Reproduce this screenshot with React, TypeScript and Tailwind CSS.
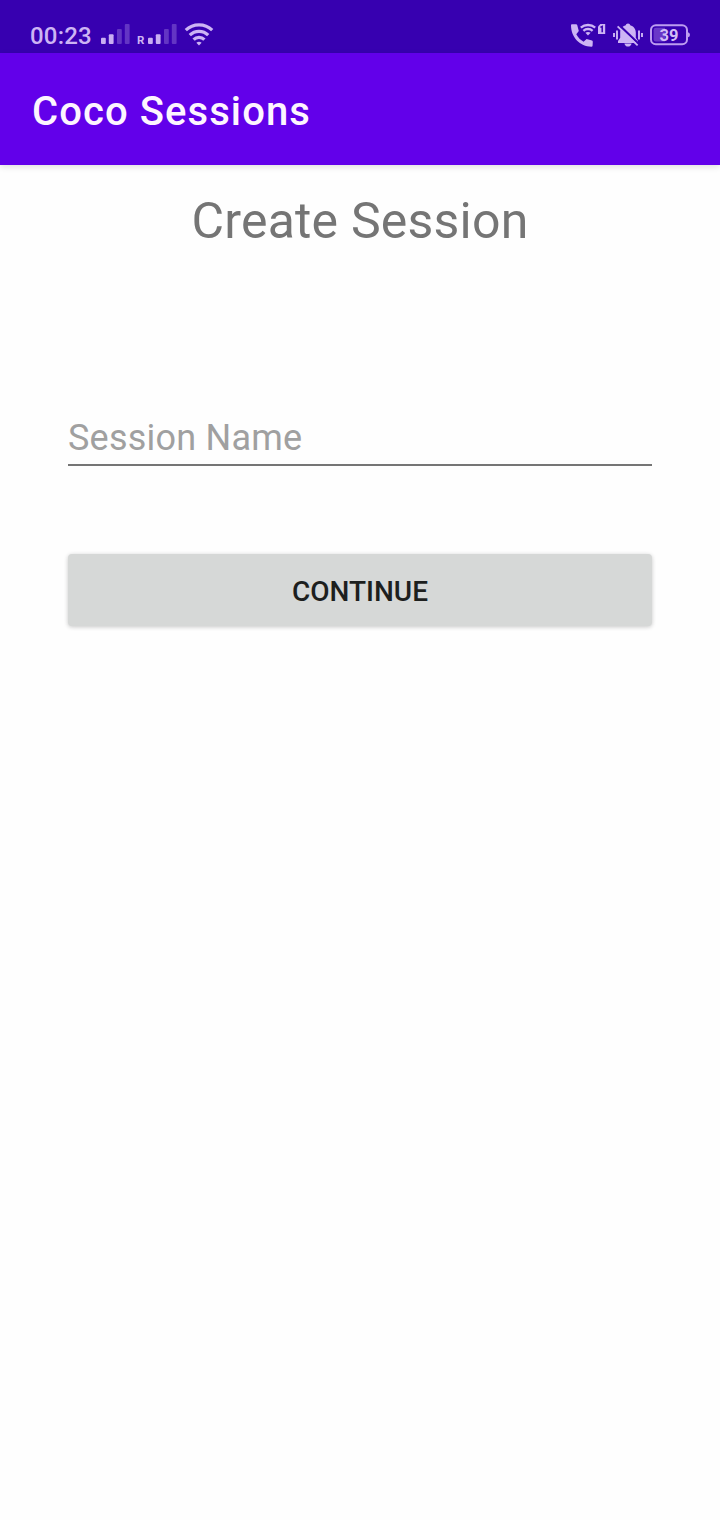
import React from "react";

function SignalBars() {
  return (
    <svg width="30" height="22" viewBox="0 0 30 22" fill="#c9aef2">
      <rect x="1" y="14.8" width="4.8" height="6.2" rx="1" />
      <rect x="8.8" y="11.3" width="4.8" height="9.7" rx="1" />
      <rect x="17" y="6" width="4.8" height="15" rx="1" opacity="0.3" />
      <rect x="24.8" y="1" width="4.8" height="20" rx="1" opacity="0.3" />
    </svg>
  );
}

function WifiIcon() {
  return (
    <svg width="30" height="24" viewBox="0 0 30 24" fill="none" stroke="#cdb4f4" strokeWidth="3.2">
      <path d="M1.8 7.2 A19 19 0 0 1 28.2 7.2" />
      <path d="M5.8 12.2 A13 13 0 0 1 24.2 12.2" />
      <path d="M9.6 16.7 A7.5 7.5 0 0 1 20.4 16.7" />
      <path d="M12.4 19.8 Q15 17.8 17.6 19.8 L15 22.4 Z" fill="#cdb4f4" stroke="none" />
    </svg>
  );
}

function WifiCallIcon() {
  return (
    <svg width="36" height="26" viewBox="0 0 36 26" fill="none">
      <path
        d="M1 2 Q1 1.2 2 1.2 L6 1.2 Q7 1.2 7.2 2 L8.8 8 L6.3 11.3 C8 14.5 10.7 17.3 13.6 18.7 L16.6 15.9 L22 17.6 Q22.8 17.9 22.8 18.8 L22.6 22.6 Q22.6 23.8 21.4 23.8 C10 23.4 1 14.6 1 2 Z"
        fill="#cdb4f4"
      />
      <g stroke="#cdb4f4" strokeWidth="2.3">
        <path d="M10.8 4.7 A11 11 0 0 1 25.2 4.7" />
        <path d="M13.4 7.8 A6.8 6.8 0 0 1 22.6 7.8" />
      </g>
      <path d="M15.4 9.8 Q18 8 20.6 9.8 L18 12.6 Z" fill="#cdb4f4" />
      <path d="M30.4 1 H35.2 V11 H28 V3.5 Z" fill="#cdb4f4" />
      <path d="M30.4 4.4 L32.2 3.4 V9.2" stroke="#3800b0" strokeWidth="1.5" />
    </svg>
  );
}

function MutedBellIcon() {
  return (
    <svg width="32" height="26" viewBox="0 0 32 26" fill="none">
      <path
        d="M16 0.6 C17.2 0.6 18 1.4 18.2 2.2 C21.7 3.1 23.8 6 23.8 9.4 V14.8 L26 18 V20 H6 V18 L8.2 14.8 V9.4 C8.2 6 10.3 3.1 13.8 2.2 C14 1.4 14.8 0.6 16 0.6 Z M12.4 20.5 H19.6 C19.2 22.6 17.8 23.6 16 23.6 C14.2 23.6 12.8 22.6 12.4 20.5 Z"
        fill="#cdb4f4"
      />
      <path d="M6.9 1.9 L27 21" stroke="#3800b0" strokeWidth="2.2" />
      <path d="M5.6 3.4 L25.6 22.4" stroke="#cdb4f4" strokeWidth="1.8" />
      <path d="M2 10 V14 M5 7.5 V16.5 M27 7.5 V16.5 M30 10 V14" stroke="#cdb4f4" strokeWidth="1.9" />
    </svg>
  );
}

function BatteryIcon() {
  return (
    <svg width="42" height="24" viewBox="0 0 42 24">
      <rect x="2" y="2.2" width="36" height="19" rx="4.8" fill="none" stroke="#bd9df0" strokeWidth="2" />
      <path d="M39 9.3 Q41 9.8 41 11.8 Q41 13.8 39 14.3 Z" fill="#bd9df0" />
      <path d="M7 4.8 H16 V18.6 H7 Q4.6 18.6 4.6 16.2 V7.2 Q4.6 4.8 7 4.8 Z" fill="#6a38c8" />
      <text x="20" y="17.8" textAnchor="middle" fill="#d3bdf6" fontSize="16.5" fontWeight="700" fontFamily="Roboto, sans-serif">
        39
      </text>
    </svg>
  );
}

function StatusBar() {
  return (
    <div className="flex h-[53px] items-start justify-between bg-[#3700b0] pl-[30px] pr-[29px] pt-[23px] text-[#cdb4f4]">
      <div className="flex items-start">
        <span className="w-[70px] text-[24px] leading-[26px] font-medium tracking-[0.2px]">00:23</span>
        <SignalBars />
        <span className="ml-[7px] w-[10px] pt-[11px] text-[11.5px] leading-[12px] font-bold">R</span>
        <SignalBars />
        <span className="ml-[7px]">
          <WifiIcon />
        </span>
      </div>
      <div className="flex items-start">
        <WifiCallIcon />
        <span className="ml-[6px]">
          <MutedBellIcon />
        </span>
        <span className="ml-[5px]">
          <BatteryIcon />
        </span>
      </div>
    </div>
  );
}

export default function App() {
  return (
    <div className="flex min-h-[1520px] w-[720px] flex-col bg-[#fefefe] font-['Roboto',sans-serif]">
      <StatusBar />
      <header className="flex h-[112px] items-center bg-[#6200ea] pl-8 pt-[5px] shadow-[0_2px_6px_rgba(0,0,0,0.12)]">
        <h1 className="text-[40px] leading-none font-medium tracking-[1.08px] text-[#fdf5ff]">Coco Sessions</h1>
      </header>
      <main className="flex flex-col px-[68px]">
        <h2 className="mt-[28px] text-center text-[50px] leading-[56px] tracking-[0.2px] text-[#757575]">Create Session</h2>
        <input
          className="mt-[163px] h-[54px] border-b-2 border-[#757575] bg-transparent p-0 text-[36px] leading-[42px] tracking-[0.22px] outline-none placeholder:text-[#a0a0a0]"
          placeholder="Session Name"
        />
        <button className="mt-[88px] h-[72px] rounded-[4px] bg-[#d6d8d7] pt-[4px] text-[28px] leading-none font-medium text-[#1d1f1e] shadow-[0_1px_4px_rgba(0,0,0,0.22)]">
          CONTINUE
        </button>
      </main>
    </div>
  );
}
